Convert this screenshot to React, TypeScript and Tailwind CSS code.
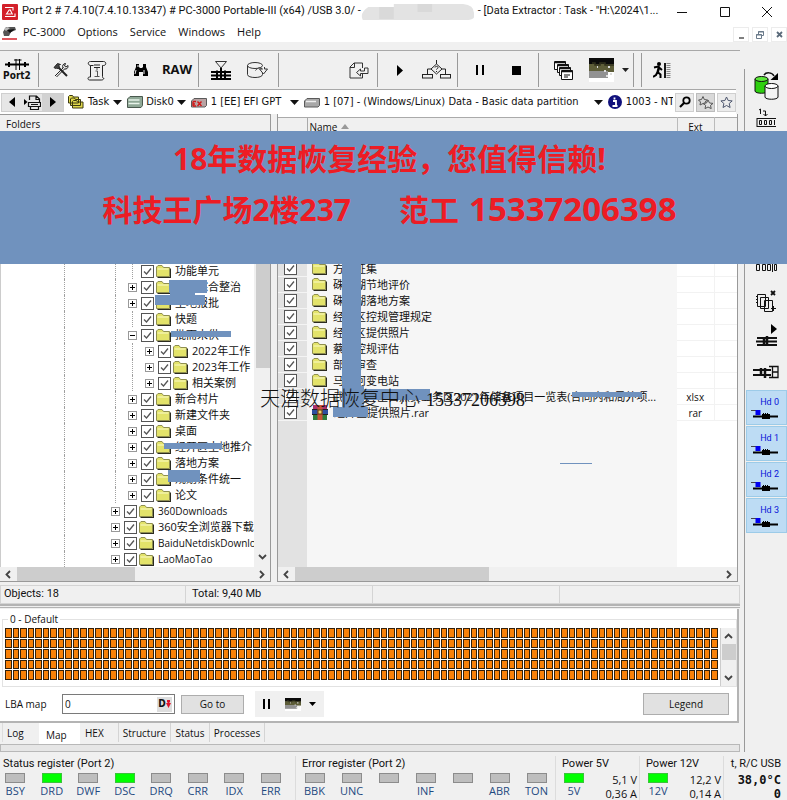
import type { ReactNode } from "react";

const UI = "font-['Open_Sans','Noto_Sans_CJK_SC',sans-serif]";

/* ---------- small drawings ---------- */

function Folder() {
  return (
    <svg width="15" height="13" viewBox="0 0 15 13" className="shrink-0">
      <path d="M1.5 12.5h13v-9" fill="none" stroke="#2b2b20" strokeWidth="1.4" />
      <path d="M.5 11.500V2l1.500-1.500h4L7.500 2.500H13.500v9z" fill="#e3e36a" stroke="#8f8f50" />
      <path d="M1.500 4h11" stroke="#fbfbc8" />
    </svg>
  );
}

function RarIcon() {
  return (
    <svg width="16" height="15" viewBox="0 0 16 15" className="shrink-0">
      <rect x="1" y="0" width="14" height="5" fill="#a8326e" />
      <rect x="0" y="5" width="16" height="5" fill="#2d4fa0" />
      <rect x="1" y="10" width="14" height="5" fill="#2f7d3c" />
      <path d="M0 4.500h16M0 9.500h16" stroke="#222" />
      <rect x="5.500" y="0" width="5" height="15" fill="#c8553a" />
      <rect x="6" y="5" width="4" height="4" fill="#f1d36a" stroke="#5a3a10" />
    </svg>
  );
}

function AppLogo() {
  return (
    <svg width="16" height="16" viewBox="0 0 16 16">
      <rect width="16" height="16" rx="1" fill="#d3202a" />
      <path d="M3 3.500h8v3M3 12.500h10v-3M7.500 5.500L4.500 10h5M8 5.500l2.500 5" fill="none" stroke="#fff" strokeWidth="1.1" />
    </svg>
  );
}

function MenuLogo() {
  return (
    <svg width="15" height="14" viewBox="0 0 15 14">
      <path d="M1 6L4 1h9l1 3-5 2-2 4H2z" fill="#555" />
      <path d="M5 4l8-1-5 4z" fill="#111" />
      <path d="M2 3l3-2 3 1-4 3z" fill="#bbb" />
      <path d="M0 13h15" stroke="#d3202a" strokeWidth="1.500" />
    </svg>
  );
}

function PortIcon() {
  return (
    <svg width="26" height="11" viewBox="0 0 26 11">
      <path d="M1 5.500h24" stroke="#000" strokeWidth="2" />
      <path d="M5 3v5M21 3v5" stroke="#000" strokeWidth="2" />
      <path d="M12 0v11M15.500 0v11M10 1h7.500" stroke="#000" />
    </svg>
  );
}

function ToolsIcon() {
  return (
    <svg width="16" height="16" viewBox="0 0 16 16" fill="none" stroke="#222">
      <path d="M2 14L10.500 5.500M3.500 15L12 6.500" />
      <path d="M10 6c-1-2 0-4.500 2.500-4.500L11.500 4l1.500 1 2-1.500C15.500 6 13.500 7.500 11.500 7" />
      <path d="M5.500 5.500L14 14" strokeWidth="2" />
      <path d="M1 5.500l3.500-4 3 1-2 1 1 1.500-2 2-1-1-1 .5z" fill="#444" />
    </svg>
  );
}

function ScrollIcon() {
  return (
    <svg width="20" height="21" viewBox="0 0 20 21" fill="none" stroke="#222">
      <path d="M3.500 1.500h13c3 0 3 4 0 4h-1v11c0 1.500 1 2 1.500 2-1 1.500-2 1.500-3 1.500H2.500c-2 0-2-3 0-3h1V5.500c-3-.5-3-4 0-4z" />
      <path d="M3.500 5.500h3M7 5h6M7 7.500h6" />
      <path d="M8.500 11h2v5M7.500 16.500h5M9 9h2" stroke="#555" />
    </svg>
  );
}

function BinocularsIcon() {
  return (
    <svg width="16" height="13" viewBox="0 0 16 13">
      <path d="M3 0h3v3l1 1h2l1-1V0h3v3l2 5v4h-5V8H6v4H1V8l2-5z" fill="#000" />
      <path d="M3 6l-1 4M11 6v4M5 1v2" stroke="#eee" />
    </svg>
  );
}

function SectorIcon() {
  return (
    <svg width="22" height="19" viewBox="0 0 22 19" fill="none" stroke="#000">
      <path d="M5.500.5h11L11 7z" stroke="#333" />
      <path d="M1 11h20M1 14.500h20M1 18h20" strokeWidth="2" />
      <path d="M7 9.500v9M15 9.500v9M11 7v12" strokeWidth="2" />
    </svg>
  );
}

function DiskDownIcon() {
  return (
    <svg width="21" height="17" viewBox="0 0 21 17" fill="none" stroke="#333">
      <path d="M.5 3.500v9c0 4 15 4 15 0v-3" />
      <ellipse cx="8" cy="3.500" rx="7.500" ry="3" />
      <path d="M8.500 8.500c2-3 5-3 7-1.500h-3l4 5 4-5h-3V5" fill="#f2f2f2" />
    </svg>
  );
}

function PageBackIcon() {
  return (
    <svg width="20" height="17" viewBox="0 0 20 17" fill="none" stroke="#333">
      <path d="M13.500 6V1H5L1 5v11h12.500v-4M5.500 1v4.500H1" />
      <path d="M7.500 10.500l4-3.500v2h4V6h3.500v5.500h-7.500v2.500z" fill="#f2f2f2" />
    </svg>
  );
}

function ChartIcon() {
  return (
    <svg width="29" height="20" viewBox="0 0 29 20" fill="none" stroke="#222">
      <path d="M14.500 0v4M14.500 4L20 9l-5.500 5L9 9zM9 9H5.500v5M20 9h3.500v5" />
      <rect x=".5" y="14.500" width="10" height="3.500" />
      <rect x="18.500" y="14.500" width="10" height="3.500" />
      <path d="M13 7.500c0-1.500 3-1.500 3 0s-1.500 1-1.500 2M14.500 11v1" />
    </svg>
  );
}

function CascadeIcon() {
  return (
    <svg width="19" height="19" viewBox="0 0 19 19" fill="#fff" stroke="#111">
      <path d="M.5.5h11v8H.5z" />
      <path d="M3.500 3.500h11v8h-11z" />
      <path d="M5.500 6.500h11v8h-11z" />
      <path d="M7.500 9.500h11v9h-11z" />
      <path d="M1 1.500h11M4 4.500h11M6 7.500h11M8 10.500h11" strokeWidth="1.500" />
      <path d="M10 14h6M10 16h4" />
    </svg>
  );
}

function PictureIcon({ small = false }: { small?: boolean }) {
  return (
    <svg width={small ? 16 : 25} height={small ? 13 : 24} viewBox="0 0 25 24" preserveAspectRatio="none">
      <rect width="25" height="24" fill="#fff" />
      <rect width="25" height="7" fill="#0a0a0a" />
      <rect y="6" width="25" height="8" fill="#5d5d38" />
      <rect y="13" width="19" height="7" fill="#929292" />
      <path d="M3 5h3v2h5V5h5v2h9" stroke="#30301c" strokeWidth="1.500" fill="none" />
      <path d="M19 9h2M15 13h2M21 16h2M17 18h2M8 9h1" stroke="#ddd" strokeWidth="2" />
    </svg>
  );
}

function RunnerIcon() {
  return (
    <svg width="18" height="17" viewBox="0 0 18 17">
      <circle cx="6" cy="2" r="2" fill="#000" />
      <path d="M6 4L4.500 10l3 2.500V16M5 9l-2 4-3 2M1 5.500l4-1 4 3.500M6 6l-1 4" fill="none" stroke="#000" strokeWidth="2" />
      <path d="M12 1v15" stroke="#000" strokeWidth="1.800" />
      <path d="M15.500 1v15" stroke="#8a8a8a" strokeWidth="4" strokeDasharray="1 1" />
    </svg>
  );
}

function DocArrowIcon() {
  return (
    <svg width="17" height="15" viewBox="0 0 17 15" fill="none" stroke="#111">
      <path d="M5.500 5V1h7l3 3v4M12 1v3.500h3.500M4.500 7.500h12v4h-12zM6.500 11.500v3h8v-3M7 9.500h7" strokeWidth="1.200" />
      <path d="M0 4l3.500 3L0 10z" fill="#000" stroke="none" />
    </svg>
  );
}

function TaskIcon() {
  return (
    <svg width="16" height="14" viewBox="0 0 16 14" fill="#e0d84c" stroke="#3c3a10">
      <path d="M.5 8V1.500l1-1h3l1 1.500h5V8zM2.500 10.500V4l1-1h3l1 1.500h5v6zM4.500 13V6.500l1-1h3l1 1.500h5.500v6z" />
    </svg>
  );
}

function DriveIcon({ tone }: { tone: "green" | "red" | "gray" }) {
  return (
    <svg width="16" height="12" viewBox="0 0 16 12">
      {tone === "green" ? (
        <>
          <path d="M3 .5h12.500v9L14 11.500H.5V3z" fill="#8fa896" stroke="#4a5a4f" />
          <path d="M1.500 4h11M1.500 7.500h11" stroke="#e8f4ea" strokeWidth="1.500" />
        </>
      ) : (
        <>
          <path d="M3 2.500h12.500v7l-1.500 1.500H.5V5z" fill={tone === "red" ? "#b9a3a3" : "#a8a8a8"} stroke="#5a5a5a" />
          {tone === "gray" && <path d="M2 5.500h10" stroke="#eee" strokeWidth="1.500" />}
          {tone === "red" && <path d="M2 5.500h3M2 8h2M2 10h3M2 5.500v4.500M6.500 5.500l4 4.500M10.500 5.500l-4 4.500" stroke="#d01818" strokeWidth="1.400" />}
        </>
      )}
    </svg>
  );
}

function InfoIcon() {
  return (
    <svg width="14" height="14" viewBox="0 0 14 14">
      <circle cx="7" cy="7" r="7" fill="#10107c" />
      <path d="M5 6h3v4.500M4.500 11h5M6.500 2.500v2" stroke="#fff" strokeWidth="1.800" fill="none" />
    </svg>
  );
}

function SearchIcon() {
  return (
    <svg width="12" height="12" viewBox="0 0 12 12" fill="none" stroke="#000">
      <circle cx="7.500" cy="4.500" r="3.200" strokeWidth="1.800" />
      <path d="M5 7L1 11" strokeWidth="2.200" />
    </svg>
  );
}

function StarIcon({ twin = false }: { twin?: boolean }) {
  return (
    <svg width={twin ? 16 : 13} height="13" viewBox={twin ? "0 0 16 13" : "0 0 13 13"} fill="none" stroke={twin ? "#555" : "#4d566e"}>
      {twin && <path d="M5 .5L6.300 3.500 9.500 4 7 6l.5 3L5 7.500 2 9l.5-3L.5 4l3-.5z" />}
      {twin ? (
        <path d="M10 4l1.500 3 3.500.4-2.500 2 .7 3.200L10 11l-3 1.600.7-3.200-2.500-2L8.500 7z" fill="#e2e2e2" />
      ) : (
        <path d="M6.500 1l1.700 3.500 4 .4-3 2.600.9 4L6.500 9.500 3 11.500l.9-4-3-2.600 4-.4z" />
      )}
    </svg>
  );
}

function DownArrow() {
  return (
    <svg width="9" height="5" viewBox="0 0 9 5" className="shrink-0">
      <path d="M0 0h9L4.500 5z" fill="#111" />
    </svg>
  );
}

function Chevron({ dir }: { dir: "left" | "right" | "up" | "down" }) {
  const d = { left: "M6 1L2.500 4.500 6 8", right: "M3 1l3.500 3.500L3 8", up: "M1 6l3.500-3.500L8 6", down: "M1 3l3.500 3.500L8 3" }[dir];
  return (
    <svg width="9" height="9" viewBox="0 0 9 9" fill="none" stroke="#444" strokeWidth="1.800">
      <path d={d} />
    </svg>
  );
}

function CylindersIcon() {
  return (
    <svg width="25" height="28" viewBox="0 0 25 28" stroke="#111">
      <path d="M1 7v12c0 3 13 3 13 0V7" fill="#2fd010" />
      <ellipse cx="7.500" cy="7" rx="6.500" ry="2.500" fill="#5ce63a" />
      <path d="M11 14v11c0 3 13 3 13 0V14" fill="#f4f4f4" />
      <ellipse cx="17.500" cy="14" rx="6.500" ry="2.500" fill="#fff" />
      <path d="M10 3c2-3 8-3 10 1" fill="none" strokeWidth="1.500" />
      <path d="M16.500 8L24 8V1z" fill="#000" stroke="none" />
    </svg>
  );
}

function CounterIcon() {
  return (
    <svg width="21" height="20" viewBox="0 0 21 20" fill="none" stroke="#111">
      <path d="M3 2l1.500-1v5M7 3h2.500v5M7.500 6l2 2 2-2" />
      <path d="M1 10.500h19M1 18.500h19M1 10v9" />
      <path d="M3.500 12.500h2v4h-2zM8.500 12.500h2v4h-2zM13.500 12.500h2v4h-2zM18.500 12v5" />
    </svg>
  );
}

function PagesCloseIcon() {
  return (
    <svg width="21" height="22" viewBox="0 0 21 22" fill="#efefef" stroke="#111">
      <path d="M1.500 4.500h8v12h-8zM4.500 7.500h8v11h-8zM8.500 10.500h8v11h-8z" />
      <path d="M0 6.500h2M0 9.500h2M0 12.500h2" />
      <path d="M15 1l4 4M19 1l-4 4" strokeWidth="1.800" />
      <path d="M15 18.500h5M17.500 16v5" />
    </svg>
  );
}

function HeadsPlayIcon() {
  return (
    <svg width="21" height="22" viewBox="0 0 21 22" stroke="#111" fill="none">
      <path d="M15 0l6 5-6 5z" fill="#000" stroke="none" />
      <path d="M1 14h20M0 17.500h21M1 21h20" strokeWidth="1.800" />
      <path d="M8 13v9M11 12v10" strokeWidth="2.500" />
    </svg>
  );
}

function HeadsBoxIcon() {
  return (
    <svg width="26" height="14" viewBox="0 0 26 14" stroke="#111" fill="none">
      <path d="M0 5h18M0 10h18" strokeWidth="2" />
      <path d="M8 3v8M12 3v10" strokeWidth="2.500" />
      <path d="M16 1.500h9v11h-9M19 7h6M19.500 2v10" strokeWidth="1.300" />
    </svg>
  );
}

function HeadIcon() {
  return (
    <svg width="28" height="11" viewBox="0 0 28 11">
      <path d="M0 1.500h6" stroke="#444" />
      <path d="M4.500 1h5v5h-5z" fill="#0000f0" />
      <path d="M2 7.500h25" stroke="#000" strokeWidth="2" />
      <path d="M11 5h1V4h1v1h1V4h1v1h1V4h1v1h2v5h-8z" fill="#000" />
    </svg>
  );
}

/* ---------- shared controls ---------- */

function Check({ label }: { label: string }) {
  return (
    <label className="relative block size-[13px] shrink-0">
      <input type="checkbox" defaultChecked aria-label={label} className="block size-[13px] appearance-none border border-[#555] bg-white" />
      <svg viewBox="0 0 13 13" className="pointer-events-none absolute inset-0" fill="none" stroke="#555" strokeWidth="1.300">
        <path d="M3 6.500l2.500 2.500L10 3.500" />
      </svg>
    </label>
  );
}

function ToolButton({ label, children, className = "w-9" }: { label: string; children: ReactNode; className?: string }) {
  return (
    <button aria-label={label} className={"flex h-full shrink-0 items-center justify-center " + className}>
      {children}
    </button>
  );
}

/* ---------- folder tree ---------- */

type Node = { name: string; level: 0 | 1 | 2; sign: "+" | "-" | ""; latin?: boolean };

const tree: Node[] = [
  { name: "功能单元", level: 1, sign: "" },
  { name: "土地综合整治", level: 1, sign: "+" },
  { name: "土地报批", level: 1, sign: "+" },
  { name: "快题", level: 1, sign: "" },
  { name: "批而未供", level: 1, sign: "-" },
  { name: "2022年工作", level: 2, sign: "+" },
  { name: "2023年工作", level: 2, sign: "+" },
  { name: "相关案例", level: 2, sign: "+" },
  { name: "新合村片", level: 1, sign: "+" },
  { name: "新建文件夹", level: 1, sign: "+" },
  { name: "桌面", level: 1, sign: "+" },
  { name: "经开区土地推介", level: 1, sign: "+" },
  { name: "落地方案", level: 1, sign: "+" },
  { name: "规划条件统一", level: 1, sign: "+" },
  { name: "论文", level: 1, sign: "+" },
  { name: "360Downloads", level: 0, sign: "+", latin: true },
  { name: "360安全浏览器下载", level: 0, sign: "+" },
  { name: "BaiduNetdiskDownlo", level: 0, sign: "+", latin: true },
  { name: "LaoMaoTao", level: 0, sign: "+", latin: true },
];

function Guide() {
  return (
    <span className="flex h-full w-[17px] shrink-0 justify-center">
      <span className="w-px border-l border-dotted border-[#a0a0a0]" />
    </span>
  );
}

function TreeRow({ node }: { node: Node }) {
  return (
    <li className="flex h-4 items-center overflow-hidden">
      <span className="h-full w-[63px] shrink-0" />
      <span className="h-full w-[43px] shrink-0 border-l border-dotted border-[#a0a0a0]" />
      {node.level > 0 && <Guide />}
      {node.level > 1 && <Guide />}
      {node.sign ? (
        <span className="flex w-[17px] shrink-0 justify-center">
          <button aria-label={"Toggle " + node.name} className="block size-[9px] border border-[#999] bg-white">
            <svg viewBox="0 0 7 7" className="block size-[7px]" stroke="#000">
              <path d={node.sign === "+" ? "M1 3.500h5M3.500 1v5" : "M1 3.500h5"} />
            </svg>
          </button>
        </span>
      ) : (
        <Guide />
      )}
      <Check label={node.name} />
      <span className="mr-1 ml-0.5 shrink-0">
        <Folder />
      </span>
      <span className={"whitespace-nowrap " + (node.latin ? "text-[10px]" : "text-[11px]")}>{node.name}</span>
    </li>
  );
}

/* ---------- file list ---------- */

type FileRow = { name: string; ext: string; kind: "folder" | "xlsx" | "rar" };

const files: FileRow[] = [
  { name: "方案征集", ext: "", kind: "folder" },
  { name: "硃山湖节地评价", ext: "", kind: "folder" },
  { name: "硃山湖落地方案", ext: "", kind: "folder" },
  { name: "经开区控规管理规定", ext: "", kind: "folder" },
  { name: "经开区提供照片", ext: "", kind: "folder" },
  { name: "蔡甸控规评估", ext: "", kind: "folder" },
  { name: "部门审查", ext: "", kind: "folder" },
  { name: "马影河变电站", ext: "", kind: "folder" },
  { name: "武汉经开区自然资业务区2021年储备项目一览表(合同内和局外项...", ext: "xlsx", kind: "xlsx" },
  { name: "经开区提供照片.rar", ext: "rar", kind: "rar" },
];

function HScroll({ thumb }: { thumb: string }) {
  return (
    <div className="flex h-[14px] items-center bg-[#f0f0f0]">
      <span className="flex w-[17px] shrink-0 justify-center">
        <Chevron dir="left" />
      </span>
      <div className="h-full flex-1">
        <div className={"h-full bg-[#cdcdcd] " + thumb} />
      </div>
      <span className="flex w-[17px] shrink-0 justify-center">
        <Chevron dir="right" />
      </span>
    </div>
  );
}

/* ---------- registers ---------- */

function Led({ on, label }: { on?: boolean; label: string }) {
  return (
    <div className="flex flex-1 flex-col items-center">
      <span className={"h-[10px] w-5 border " + (on ? "border-[#3ac43a] bg-[#00ff00]" : "border-[#8c8c8c] bg-[#bebebe]")} />
      <span className="h-4 text-[11px] leading-4 text-[#1f4a80]">{label}</span>
    </div>
  );
}

function Register({ title, leds, className }: { title: string; leds: [string, boolean][]; className: string }) {
  return (
    <section className={"border-r border-[#dcdcdc] " + className}>
      <h2 className="h-[17px] whitespace-nowrap pl-[6px] font-['Roboto',sans-serif] text-[11px] leading-4">{title}</h2>
      <div className="flex">
        {leds.map(([label, on], i) => (
          <Led key={i} label={label} on={on} />
        ))}
      </div>
    </section>
  );
}

function Power({ title, led, volts, amps }: { title: string; led: string; volts: string; amps: string }) {
  return (
    <section className="w-[84px] shrink-0 border-r border-[#dcdcdc]">
      <h2 className="h-[17px] whitespace-nowrap pl-[6px] font-['Roboto',sans-serif] text-[11px] leading-4">{title}</h2>
      <div className="flex">
        <div className="w-9 shrink-0">
          <Led on label={led} />
        </div>
        <div className="flex-1 pr-0.5 text-right text-[11px] leading-[14px]">
          <div>{volts}</div>
          <div>{amps}</div>
        </div>
      </div>
    </section>
  );
}

/* ---------- painted-over names ---------- */

const patches = [
  "left-[342px] top-[262px] w-[19px] h-[124px]",
  "left-[361px] top-[389px] w-[69px] h-[11px]",
  "left-[342px] top-[386px] w-[22px] h-[22px]",
  "left-[333px] top-[407px] w-[35px] h-[10px]",
  "left-[572px] top-[392px] w-[70px] h-[5px]",
  "left-[169px] top-[280px] w-[38px] h-[13px]",
  "left-[170px] top-[290px] w-[25px] h-[8px]",
  "left-[155px] top-[295px] w-[50px] h-[10px]",
  "left-[171px] top-[331px] w-[60px] h-[6px]",
  "left-[164px] top-[443px] w-[58px] h-[6px]",
  "left-[168px] top-[470px] w-[32px] h-[12px]",
  "left-[560px] top-[463px] w-[32px] h-px",
];

const mapCells = Array.from({ length: 475 }, (_, i) => i);

export default function App() {
  return (
    <div className={"relative overflow-hidden bg-[#f0f0f0] text-[11px] text-[#111] " + UI}>
      {/* title bar */}
      <header className="bg-white">
        <div className="flex h-[23px] items-center pl-0.5">
          <AppLogo />
          <h1 className="ml-1 flex items-center whitespace-nowrap font-['Roboto',sans-serif] text-[11px]">
            <span>Port 2 # 7.4.10(7.4.10.13347) # PC-3000 Portable-III (x64) /USB 3.0/ -</span>
            <span className="mr-1 flex h-[18px] w-[113px] items-center">
              <svg viewBox="0 0 124 18" preserveAspectRatio="none" className="size-full">
                <path d="M8 4h28V1h76q12 1 12 9v4q0 2-6 3H2Q-2 10 8 4z" fill="#e3e3e3" />
                <path d="M20 4h16v12H20zM62 1h16v8H62z" fill="#d9d9d9" />
              </svg>
            </span>
            <span>- [Data Extractor : Task - "H:\2024\1...</span>
          </h1>
          <div className="ml-auto flex">
            <button aria-label="Minimize" className="flex w-[43px] items-center justify-center">
              <svg width="10" height="10" viewBox="0 0 10 10" stroke="#111"><path d="M0 5.500h10" /></svg>
            </button>
            <button aria-label="Maximize" className="flex w-[43px] items-center justify-center">
              <svg width="10" height="10" viewBox="0 0 10 10" fill="none" stroke="#111"><path d="M.5.5h9v9h-9z" /></svg>
            </button>
            <button aria-label="Close" className="flex w-[41px] items-center justify-center">
              <svg width="10" height="10" viewBox="0 0 10 10" stroke="#111"><path d="M0 0l10 10M10 0L0 10" /></svg>
            </button>
          </div>
        </div>
        <div className="flex h-[19px] items-end">
          <nav className="flex h-full items-center pl-0.5">
            <MenuLogo />
            <button className="ml-1.5 mr-3">PC-3000</button>
            <button className="mr-3">Options</button>
            <button className="mr-3">Service</button>
            <button className="mr-3">Windows</button>
            <button>Help</button>
          </nav>
          <div className="ml-auto flex gap-[3px]">
            <button aria-label="Minimize window" className="flex h-[15px] w-4 items-center justify-center border border-[#ececec]">
              <svg width="7" height="8" viewBox="0 0 7 8" stroke="#555" strokeWidth="1.500"><path d="M1 7h5" /></svg>
            </button>
            <button aria-label="Restore window" className="flex h-[15px] w-4 items-center justify-center border border-[#ececec]">
              <svg width="8" height="8" viewBox="0 0 8 8" fill="none" stroke="#6a7a8a"><path d="M2.500 3V.5h5v4H6M.5 3.500h5v4h-5zM2 1h6M0 4h6" /></svg>
            </button>
            <button aria-label="Close window" className="flex h-[15px] w-4 items-center justify-center border border-[#ececec]">
              <svg width="7" height="7" viewBox="0 0 7 7" stroke="#5a6a7a" strokeWidth="1.800"><path d="M1 1l5 5M6 1L1 6" /></svg>
            </button>
          </div>
        </div>
      </header>

      <main className="flex">
        <div className="min-w-0 flex-1 pt-2">
          {/* tool bar */}
          <div className="border-t border-[#a8a8a8] py-0.5">
            <div className="flex h-[34px] divide-x divide-[#999]">
              <div className="w-[39px] shrink-0">
                <button className="flex h-full w-[34px] flex-col items-center justify-center">
                  <PortIcon />
                  <span className="font-['DejaVu_Sans_Condensed',sans-serif] text-[10px] font-bold leading-[12px]">Port2</span>
                </button>
              </div>
              <div className="flex w-20 shrink-0 pl-1">
                <ToolButton label="Utility settings"><ToolsIcon /></ToolButton>
                <ToolButton label="Task information"><ScrollIcon /></ToolButton>
              </div>
              <div className="flex w-20 shrink-0 pl-1">
                <ToolButton label="Find"><BinocularsIcon /></ToolButton>
                <ToolButton label="RAW recovery">
                  <span className="font-['Open_Sans',sans-serif] text-[13px] font-bold">RAW</span>
                </ToolButton>
              </div>
              <div className="flex w-20 shrink-0 pl-1">
                <ToolButton label="Sectors"><SectorIcon /></ToolButton>
                <ToolButton label="Save disk"><DiskDownIcon /></ToolButton>
              </div>
              <div className="flex w-[99px] shrink-0 justify-end">
                <ToolButton label="Export"><PageBackIcon /></ToolButton>
              </div>
              <div className="flex w-20 shrink-0 pl-1">
                <ToolButton label="Start"><svg width="6" height="11" viewBox="0 0 6 11"><path d="M0 0l6 5.500L0 11z" /></svg></ToolButton>
                <ToolButton label="Process chart"><ChartIcon /></ToolButton>
              </div>
              <div className="flex w-[81px] shrink-0 pl-1">
                <ToolButton label="Pause"><svg width="8" height="10" viewBox="0 0 8 10"><path d="M0 0h2v10H0zM6 0h2v10H6z" /></svg></ToolButton>
                <ToolButton label="Stop"><svg width="9" height="9" viewBox="0 0 9 9"><path d="M0 0h9v9H0z" /></svg></ToolButton>
              </div>
              <div className="flex w-[95px] shrink-0 pl-1.5">
                <ToolButton label="Cascade"><CascadeIcon /></ToolButton>
                <ToolButton label="Map view" className="w-10"><PictureIcon /></ToolButton>
                <ToolButton label="Map view options" className="w-2"><svg width="7" height="4" viewBox="0 0 7 4"><path d="M0 0h7L3.500 4z" fill="#222" /></svg></ToolButton>
              </div>
              <div className="w-2 shrink-0" />
              <div className="flex flex-1 pl-0.5">
                <ToolButton label="Exit"><RunnerIcon /></ToolButton>
              </div>
            </div>
          </div>

          {/* path bar */}
          <div className="mr-1 flex h-[25px] items-center border-t border-[#a8a8a8] bg-white pl-px">
            <div className="flex h-[19px] border border-[#cfcfcf] bg-[#e6e6e6]">
              <button aria-label="Back" className="flex w-5 items-center justify-center">
                <svg width="6" height="10" viewBox="0 0 6 10"><path d="M6 0v10L0 5z" /></svg>
              </button>
              <button aria-label="History" className="flex w-5 items-center justify-center"><DocArrowIcon /></button>
              <button aria-label="Forward" className="flex w-[21px] items-center justify-center bg-[#d2d2d2]">
                <svg width="6" height="10" viewBox="0 0 6 10"><path d="M0 0v10l6-5z" /></svg>
              </button>
            </div>
            <nav className="ml-1 flex min-w-0 flex-1 items-center gap-[5px] overflow-hidden whitespace-nowrap font-['DejaVu_Sans_Condensed',sans-serif] text-[11px]">
              <button className="flex shrink-0 items-center gap-1"><TaskIcon />Task<DownArrow /></button>
              <button className="flex shrink-0 items-center gap-[3px]"><DriveIcon tone="green" />Disk0<DownArrow /></button>
              <button className="flex shrink-0 items-center gap-1">
                <DriveIcon tone="red" />
                <span className="w-[75px] text-left">1 [EE] EFI GPT</span>
                <DownArrow />
              </button>
              <button className="flex shrink-0 items-center gap-1">
                <DriveIcon tone="gray" />
                <span className="w-[266px] text-left">1 [07] - (Windows/Linux) Data - Basic data partition</span>
                <DownArrow />
              </button>
              <button className="flex shrink-0 items-center gap-1"><InfoIcon />1003 - NT</button>
            </nav>
            <div className="ml-0.5 flex gap-0.5">
              <button aria-label="Search" className="flex size-[19px] items-center justify-center border border-[#cfcfcf] bg-[#ececec]"><SearchIcon /></button>
              <button aria-label="Favourites" className="flex size-[19px] items-center justify-center border border-[#bcbcbc] bg-[#d9d9d9]"><StarIcon twin /></button>
              <button aria-label="Add favourite" className="flex size-[19px] items-center justify-center border border-[#cfcfcf] bg-[#ececec]"><StarIcon /></button>
            </div>
          </div>

          {/* panels */}
          <div className="flex items-stretch gap-1.5 pr-0.5">
            <section className="w-[271px] shrink-0 border-b border-r border-[#999] bg-white text-[10px] leading-4">
              <h2 className="h-[18px] border-t border-[#999] bg-[#f0f0f0] pl-1.5 leading-[18px]">Folders</h2>
              <div className="flex border-l border-[#ccc]">
                <ul className="min-w-0 flex-1 overflow-hidden pt-[131px]">
                  {tree.map((n) => (
                    <TreeRow key={n.name} node={n} />
                  ))}
                </ul>
                <div className="flex w-4 flex-col items-center bg-[#f0f0f0]">
                  <div className="ml-0.5 h-[236px] w-[14px] bg-[#cdcdcd]" />
                  <span className="mb-1.5 mt-auto">
                    <Chevron dir="down" />
                  </span>
                </div>
              </div>
              <HScroll thumb="w-[118px]" />
            </section>

            <section className="flex min-w-0 flex-1 flex-col border-b border-l border-r border-[#999] bg-white pt-[3px]">
              <table className="w-full flex-1 table-fixed border-collapse text-[11px] leading-[14px]">
                <colgroup>
                  <col className="w-[29px]" />
                  <col />
                  <col className="w-[37px]" />
                  <col className="w-[23px]" />
                </colgroup>
                <thead>
                  <tr className="h-[18px] border-t border-[#aaa] bg-[#f0f0f0] text-left text-[10px]">
                    <th aria-label="Selected" className="border-r border-[#aaa]" />
                    <th className="border-r border-[#bbb] pl-0.5 font-normal">
                      <span className="flex items-center gap-1">
                        Name
                        <svg width="8" height="5" viewBox="0 0 8 5"><path d="M0 5h8L4 0z" fill="#999" /></svg>
                      </span>
                    </th>
                    <th className="border-r border-[#bbb] text-center font-normal">Ext</th>
                    <th aria-label="Size" />
                  </tr>
                </thead>
                <tbody>
                  <tr className="h-[125px]">
                    <td className="bg-[#e2e2e2]" />
                    <td className="bg-[#f6f6f6]" />
                    <td />
                    <td />
                  </tr>
                  {files.map((f) => (
                    <tr key={f.name} className="h-4">
                      <td className="border-b border-[#f4f4f4] bg-[#e2e2e2] pl-1.5"><Check label={f.name} /></td>
                      <td className="bg-[#f6f6f6] pl-[5px]">
                        <span className="flex items-center gap-1.5">
                          {f.kind === "folder" && <Folder />}
                          {f.kind === "rar" && <RarIcon />}
                          {f.kind === "xlsx" && <span className="w-[15px] shrink-0" />}
                          <span className="truncate">{f.name}</span>
                        </span>
                      </td>
                      <td className="border-b border-r border-[#f2f2f2] text-center text-[10px]">{f.ext}</td>
                      <td className="border-b border-[#f2f2f2]" />
                    </tr>
                  ))}
                  <tr>
                    <td className="bg-[#e2e2e2]" />
                    <td className="bg-[#f6f6f6]" />
                    <td />
                    <td />
                  </tr>
                </tbody>
              </table>
              <HScroll thumb="w-[194px]" />
            </section>
          </div>

          {/* status line */}
          <div className="mt-[3px] flex h-[19px] items-center border border-[#d4d4d4] text-[11px]">
            <span className="w-[185px] border-r border-[#d4d4d4] pl-[3px] font-['Roboto',sans-serif]">Objects: 18</span>
            <span className="w-[187px] border-r border-[#d4d4d4] pl-1.5 font-['Roboto',sans-serif]">Total: 9,40 Mb</span>
            <span className="h-full w-[187px] border-r border-[#d4d4d4]" />
          </div>
          <div className="h-1 border-b border-t-2 border-[#b4b4b4]" />

          {/* map panel */}
          <section className="mr-px mt-px border-b-2 border-r-2 border-[#b4b4b4] bg-white pl-0.5 pt-[3px]">
            <fieldset className="border border-[#e2e2e2]">
              <legend className="ml-[5px] px-0.5 text-[10px] leading-[14px]">0 - Default</legend>
              <div className="flex pt-0.5">
                <div className="grid h-[52px] min-w-0 flex-1 grid-cols-[repeat(95,minmax(0,1fr))] gap-px pl-0.5">
                  {mapCells.map((i) => (
                    <span key={i} className="border border-[#33200a] bg-[#f98108]" />
                  ))}
                </div>
                <div className="ml-0.5 flex h-[58px] w-4 flex-col items-center border-l border-[#ccc] bg-[#f0f0f0] py-1">
                  <Chevron dir="up" />
                  <div className="mt-[3px] h-4 w-[14px] bg-[#cdcdcd]" />
                  <span className="mt-auto">
                    <Chevron dir="down" />
                  </span>
                </div>
              </div>
            </fieldset>
            <div className="flex h-[34px] items-center pl-[3px] pr-2 text-[10px]">
              <label htmlFor="lba" className="w-[57px]">LBA map</label>
              <div className="flex h-5 w-[113px] items-center border border-[#7a7a7a] bg-white pr-0.5">
                <input id="lba" defaultValue="0" className="min-w-0 flex-1 pl-0.5 outline-none" />
                <button aria-label="Decimal" className="flex h-[15px] w-[15px] items-center justify-center bg-[#dedede] font-['DejaVu_Sans_Condensed',sans-serif] text-[10px] font-bold leading-none">
                  D
                  <svg width="5" height="8" viewBox="0 0 5 8"><path d="M1 0h3v2H3.500v1H5L2.500 8 0 3h1.500V2H1z" fill="#e0142c" /></svg>
                </button>
              </div>
              <button className="ml-1.5 h-[19px] w-[63px] border border-[#adadad] bg-[#e1e1e1]">Go to</button>
              <div className="ml-[11px] flex h-[26px] w-[69px] items-center bg-[#f0f0f0] pl-2">
                <button aria-label="Pause map"><svg width="7" height="10" viewBox="0 0 7 10"><path d="M0 0h2v10H0zM5 0h2v10H5z" /></svg></button>
                <button aria-label="Map colours" className="ml-[15px]"><PictureIcon small /></button>
                <button aria-label="Map options" className="ml-2"><svg width="7" height="4" viewBox="0 0 7 4"><path d="M0 0h7L3.500 4z" /></svg></button>
              </div>
              <button className="ml-auto h-[22px] w-[86px] border border-[#adadad] bg-[#e1e1e1]">Legend</button>
            </div>
          </section>

          {/* tabs */}
          <nav className="flex h-[21px] items-start pl-0.5 text-[10px] leading-[18px]">
            <button className="h-[19px] w-[37px] border-l border-[#ddd] pl-1 text-left">Log</button>
            <button className="h-[21px] w-[41px] bg-white pl-[7px] pt-0.5 text-left">Map</button>
            <button className="h-[19px] w-[39px] border-r border-[#d4d4d4] pl-[5px] text-left">HEX</button>
            <button className="h-[19px] w-[52px] border-r border-[#d4d4d4]">Structure</button>
            <button className="h-[19px] w-[39px] border-r border-[#d4d4d4]">Status</button>
            <button className="h-[19px] w-[55px] border-r border-[#d4d4d4]">Processes</button>
          </nav>
          <div className="h-2 border border-[#b8b8b8] bg-[#e6e6e6]" />
        </div>

        {/* head selector */}
        <aside className="ml-1 flex w-[43px] shrink-0 pt-[27px]">
          <div className="flex w-full flex-col border-l border-[#999]">
            <button aria-label="Copy disk" className="mt-[3px] flex justify-center"><CylindersIcon /></button>
            <button aria-label="Counter" className="mt-2 flex justify-center"><CounterIcon /></button>
            <button aria-label="Cells" className="mt-[136px] flex justify-center">
              <svg width="21" height="8" viewBox="0 0 21 8" fill="none" stroke="#111"><path d="M.5.500h3v6h-3zM6.500.500h3v6h-3zM11.500.500h3v6h-3zM16.500 0v8M18.500.5h2v6h-2z" /></svg>
            </button>
            <button aria-label="Close copies" className="mt-[18px] flex justify-center"><PagesCloseIcon /></button>
            <button aria-label="Run heads" className="mt-3 flex justify-center"><HeadsPlayIcon /></button>
            <button aria-label="Head layout" className="mt-[19px] flex justify-center"><HeadsBoxIcon /></button>
            <div className="ml-px mt-[11px] flex flex-col gap-px">
              {["Hd 0", "Hd 1", "Hd 2", "Hd 3"].map((h) => (
                <button key={h} className="flex h-[35px] flex-col border border-[#9ccbe8] bg-[#bddcf4] pt-1 text-right font-['Roboto',sans-serif] text-[9px] leading-[14px] text-[#0a14d8]">
                  <span className="self-end pr-[7px]">{h}</span>
                  <span className="pl-1"><HeadIcon /></span>
                </button>
              ))}
            </div>
          </div>
        </aside>
      </main>

      {/* registers */}
      <footer className="flex h-[50px] border-b border-[#ccc] pt-1">
        <Register
          title="Status register (Port 2)"
          className="-ml-[3px] w-[299px] shrink-0 pr-1.5"
          leds={[["BSY", false], ["DRD", true], ["DWF", false], ["DSC", true], ["DRQ", false], ["CRR", false], ["IDX", false], ["ERR", false]]}
        />
        <Register
          title="Error register (Port 2)"
          className="min-w-0 flex-1"
          leds={[["BBK", false], ["UNC", false], ["", false], ["INF", false], ["", false], ["ABR", false], ["TON", false]]}
        />
        <Power title="Power 5V" led="5V" volts="5,1 V" amps="0,36 A" />
        <Power title="Power 12V" led="12V" volts="12,2 V" amps="0,14 A" />
        <section className="w-[63px] shrink-0 pr-1.5 text-right">
          <h2 className="h-[17px] whitespace-nowrap font-['Roboto',sans-serif] text-[11px] leading-4">t, R/C USB</h2>
          <div className="font-['DejaVu_Sans_Mono',monospace] text-[12px] font-bold leading-[14px]">
            <div>38,0°C</div>
            <div>0</div>
          </div>
        </section>
      </footer>

      {/* paint over names */}
      {patches.map((p) => (
        <span key={p} className={"absolute bg-[#7092be] " + p} />
      ))}

      {/* watermark */}
      <p className="pointer-events-none absolute left-[260px] top-[386px] whitespace-nowrap font-['Liberation_Serif','Noto_Sans_CJK_SC',serif] text-[20px] font-light leading-[26px]">
        天浩数据恢复中心<span className="ml-1.5 text-[18px]">15337206398</span>
      </p>

      {/* banner */}
      <div className="absolute inset-x-0 top-[131px] h-[133px] bg-[#7092be] pr-2 pt-[3px] text-center font-['Open_Sans','Noto_Sans_CJK_SC',sans-serif] text-[30px] font-bold leading-[50px] text-[#ed1c24]">
        <p>18年数据恢复经验，您值得信赖!</p>
        <p>
          科技王广场2楼237<span className="ml-12">范工</span><span className="ml-2.5 text-[33px]">15337206398</span>
        </p>
      </div>
    </div>
  );
}
